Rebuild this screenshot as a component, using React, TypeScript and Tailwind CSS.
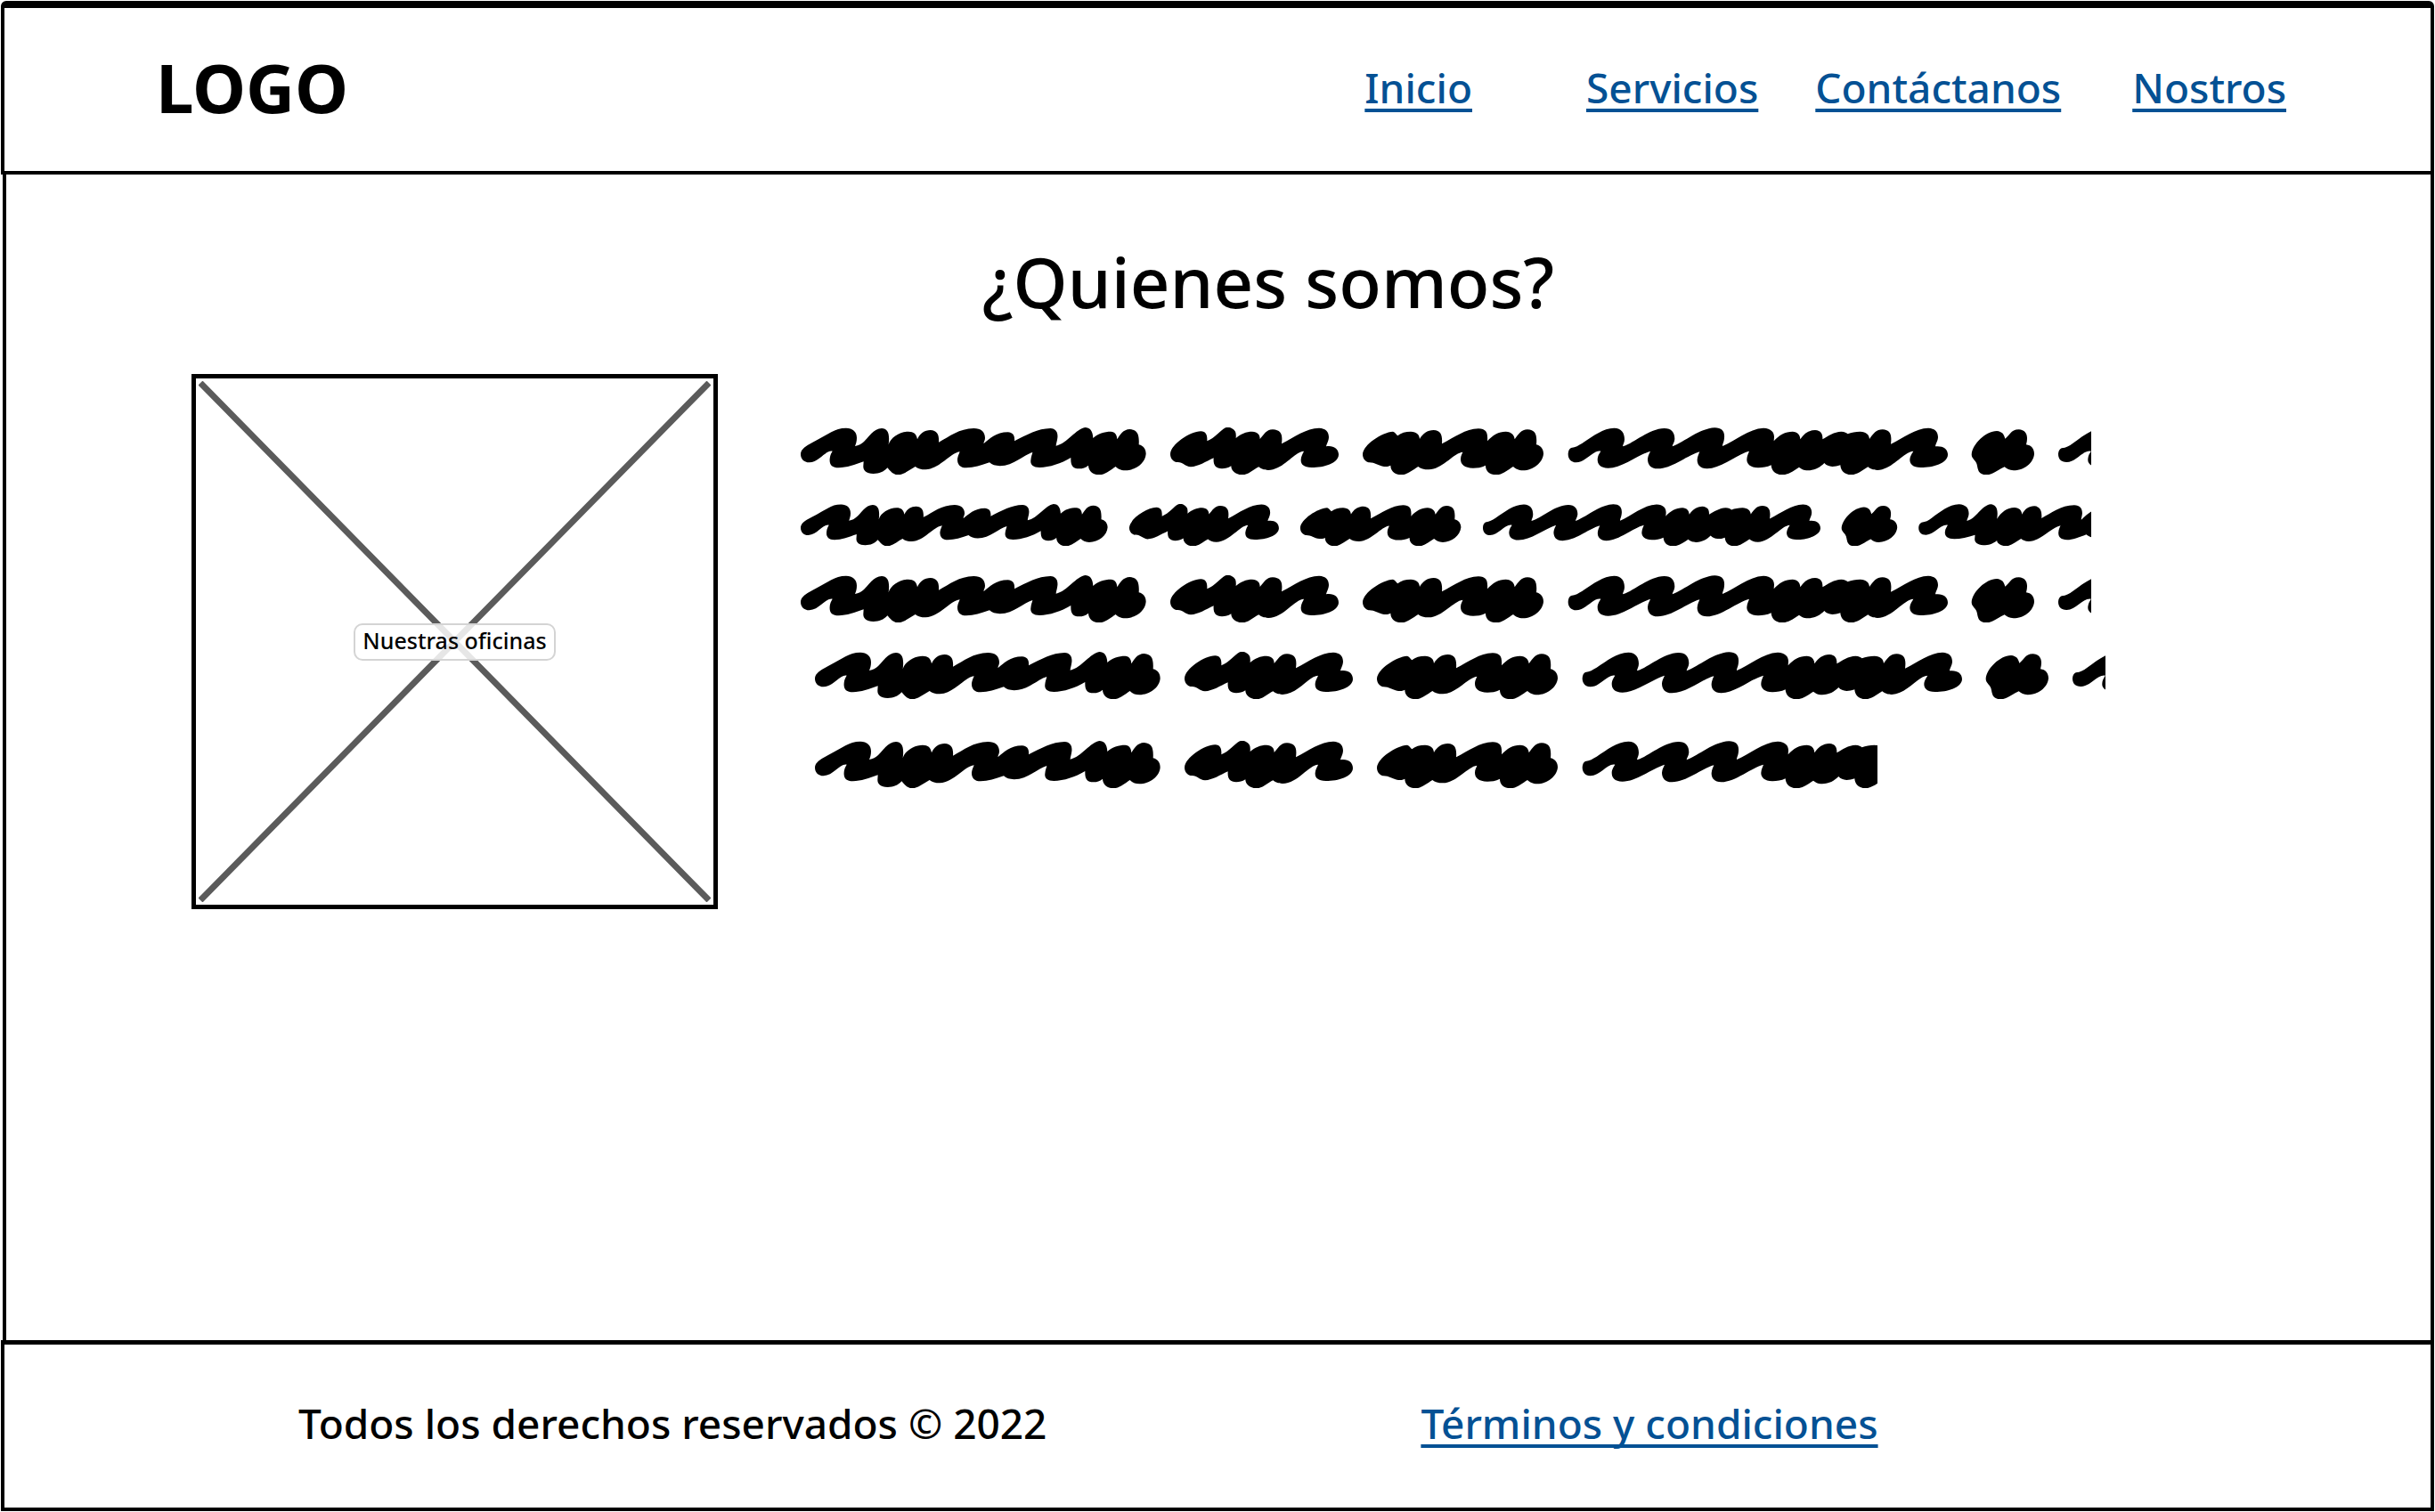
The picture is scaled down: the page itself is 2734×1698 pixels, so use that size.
const NAV_LINKS = [
  { label: "Inicio", spacing: "mr-16" },
  { label: "Servicios", spacing: "" },
  { label: "Contáctanos", spacing: "" },
  { label: "Nostros", spacing: "ml-4" },
];

const LINK_CLASS =
  "text-[#045194] underline decoration-4 underline-offset-[6px] [text-decoration-skip-ink:none]";

/* Scribbled words; each one is a blob outline and its shift along the line. */
const WORDS = [
  {
    transform: "translate(0 0)",
    d: "M57 152C57 140 66 131 80 122C105 109 130 95 160 78C175 69 190 64 210 64C232 64 246 76 246 97C246 110 243 116 240 125C252 123 262 118 270 110C285 97 303 65 330 65C350 66 358 82 353 120C360 95 392 76 420 76C438 76 447 84 450 102C458 82 474 71 494 71C518 72 524 88 522 112C560 92 590 66 640 65C664 65 678 77 678 97C678 108 672 112 674 116C692 102 715 78 755 78C772 79 779 90 777 108C820 86 855 66 898 65C918 66 924 80 922 97C921 108 917 116 917 124C955 116 985 66 1015 62C1030 62 1041 72 1042 98C1058 82 1080 76 1102 76C1116 77 1122 86 1123 102C1134 86 1142 69 1166 68C1192 70 1198 86 1196 120C1212 124 1220 136 1220 151C1218 182 1186 206 1150 207C1134 206 1126 202 1118 194C1100 206 1084 221 1062 222C1040 221 1027 208 1026 190C1016 198 1008 201 995 201C973 201 966 190 967 164C935 184 895 196 862 197C838 197 830 186 832 172C833 160 837 152 838 146C808 154 775 191 728 192C712 191 702 188 693 180C665 190 640 197 615 198C592 198 584 184 585 168C587 156 591 150 593 144C560 148 525 202 478 204C462 204 452 201 443 194C424 204 404 222 384 222C366 221 358 207 349 198C336 212 322 218 302 218C276 217 267 206 268 192L269 177C240 187 212 198 185 198C162 198 153 186 155 168C156 154 161 148 164 142C140 138 120 179 86 180C68 180 57 168 57 152Z",
  },
  {
    transform: "translate(1230 0)",
    d: "M72 152C74 118 138 76 175 75C193 76 197 88 196 108C222 99 242 70 258 63C266 61 276 62 280 66C293 74 294 80 293 98C308 84 328 76 348 76C366 77 374 86 374 101C388 86 394 70 417 69C446 71 451 86 447 117C490 95 530 64 573 64C596 65 606 77 606 95C605 110 599 116 597 126C622 122 639 134 639 154C638 182 590 197 548 197C520 196 511 186 512 170C513 157 520 148 522 142C490 143 455 204 402 206C386 206 378 201 370 195C352 204 336 221 315 222C292 222 277 208 277 192C266 199 258 201 246 201C224 200 216 188 218 165C192 177 166 194 141 195C120 193 114 176 92 179C80 176 72 165 72 152Z",
  },
  {
    transform: "translate(1230 0)",
    d: "M720 152C722 120 785 78 822 76C829 78 833 86 838 90C850 80 864 76 882 76C902 77 911 86 912 101C922 83 938 71 959 71C984 73 989 88 987 117C1030 95 1066 67 1110 66C1137 67 1142 80 1140 108C1158 88 1178 76 1202 76C1222 77 1231 88 1232 102C1244 86 1254 69 1275 69C1302 71 1308 86 1305 120C1321 124 1329 136 1329 151C1326 182 1294 206 1260 207C1244 206 1236 202 1227 194C1208 206 1192 221 1170 222C1146 221 1134 208 1134 190C1120 197 1106 199 1092 199C1062 198 1050 186 1050 169C1050 157 1056 150 1057 145C1027 148 988 203 943 204C926 204 915 201 907 194C888 206 868 222 850 222C828 221 814 208 814 190C806 194 800 194 792 194C772 191 760 179 740 180C728 176 720 166 720 152Z",
  },
  {
    transform: "translate(2430 0)",
    d: "M212 152C212 142 216 134 222 131C238 129 246 123 260 115C295 92 328 65 367 64C392 65 402 80 402 102C402 113 397 119 396 126C438 113 484 66 536 65C560 65 571 79 571 101C570 113 564 119 563 126C605 111 652 66 706 63C730 63 740 76 738 97C737 112 732 117 732 125C775 108 820 66 870 64C896 65 906 78 906 94L905 108C922 88 944 76 968 76C985 77 993 86 994 102C1007 82 1022 72 1044 71C1066 73 1070 86 1069 102C1088 90 1108 77 1132 76C1144 76 1150 81 1154 84C1166 79 1180 76 1196 76C1216 77 1226 86 1227 101C1240 83 1250 69 1271 69C1298 71 1303 86 1299 118C1342 96 1382 65 1425 64C1448 65 1458 77 1458 95C1457 110 1450 116 1449 126C1474 123 1491 134 1491 154C1490 182 1442 197 1400 197C1372 196 1363 186 1363 170C1364 157 1372 148 1375 142C1343 143 1305 204 1254 206C1238 206 1230 201 1222 195C1204 206 1188 221 1165 222C1143 221 1130 208 1129 189C1118 193 1112 194 1102 194C1090 193 1082 190 1075 182C1060 197 1044 206 1020 207C1004 206 998 202 990 196C972 208 954 222 932 222C910 221 897 208 896 189C882 196 868 198 852 198C824 197 813 184 814 169C815 156 820 148 822 142C782 152 728 200 680 201C655 200 646 186 647 170C648 158 653 150 655 144C612 156 562 201 514 201C489 201 480 186 480 169C481 156 487 148 489 142C445 156 393 199 347 199C320 198 311 186 311 169C312 155 319 148 322 142C297 136 272 180 239 180C222 180 212 168 212 152Z",
  },
  {
    transform: "translate(3630 0)",
    d: "M371 153C374 118 418 75 456 74C474 76 480 84 484 100C498 92 502 69 530 69C556 71 563 90 555 120C572 122 582 134 582 151C580 182 546 207 512 207C498 206 490 202 482 195C464 202 444 222 420 222C396 221 393 208 390 192C388 172 371 170 371 153Z",
  },
  {
    transform: "matrix(1.125 0 0 1.125 4077 -298)",
    d: "M192 400C192 391 196 385 202 382C216 380 224 376 236 367C264 347 294 322 328 321C352 322 362 336 361 354C360 366 355 370 355 377C386 370 404 324 435 321C454 323 461 338 456 370C470 348 490 332 515 332C532 333 539 342 540 355C550 337 562 328 582 327C602 329 608 343 606 368C640 350 670 325 716 324C736 325 744 336 743 353C742 364 739 368 740 373C754 360 765 350 776 344L800 330L800 436L774 432C768 430 762 428 757 423C732 433 710 441 692 441C670 440 662 430 663 416C664 404 668 398 670 393C640 398 605 445 563 446C550 445 544 442 537 437C520 446 504 462 486 462C468 461 456 452 456 443C440 456 428 458 410 459C388 458 380 448 381 437L382 424C358 432 334 438 312 438C288 437 279 428 281 413C282 402 288 396 290 391C264 388 246 424 217 424C200 424 192 414 192 400Z",
  },
];

const LINES = [
  { box: "max-w-[1449px]", svg: "h-[53px] w-[1449px]", viewBox: "57 62 4347 159" },
  { box: "max-w-[1449px]", svg: "h-[47px] w-[1449px]", viewBox: "57 62 4890 158" },
  { box: "max-w-[1449px]", svg: "h-[53px] w-[1449px]", viewBox: "57 62 4347 159" },
  { box: "ml-4 max-w-[1449px]", svg: "h-[53px] w-[1449px]", viewBox: "57 62 4347 159" },
  { box: "mt-[14px] ml-4 max-w-[1193px]", svg: "h-[53px] w-[1193px]", viewBox: "57 62 3579 159" },
];

function ScribbleLine({ line }: { line: (typeof LINES)[number] }) {
  return (
    <div className={`w-full overflow-hidden ${line.box}`}>
      <svg
        aria-hidden="true"
        className={`block max-w-none ${line.svg}`}
        viewBox={line.viewBox}
        preserveAspectRatio="xMinYMin meet"
      >
        {WORDS.map((word) => (
          <path key={word.d} d={word.d} transform={word.transform} fill="#000" />
        ))}
      </svg>
    </div>
  );
}

function ImagePlaceholder({ label }: { label: string }) {
  return (
    <figure className="relative flex h-[601px] w-[591px] shrink-0 items-center justify-center border-[5px] border-black">
      <svg
        aria-hidden="true"
        className="absolute inset-[3px] size-auto"
        viewBox="0 0 575 585"
        stroke="#5b5b5b"
        strokeWidth="7"
      >
        <path d="M2 2L573 583M573 2L2 583" />
      </svg>
      <figcaption className="relative rounded-[10px] border-2 border-[#d4d4d4] bg-white/85 px-2 pb-1 text-[25px] leading-[34px] font-medium">
        {label}
      </figcaption>
    </figure>
  );
}

export default function App() {
  return (
    <div className="flex min-h-screen flex-col bg-white px-px pt-px pb-px font-['Noto_Sans',sans-serif] text-black">
      <header className="flex items-center justify-between rounded-t-[6px] border-4 border-t-8 border-black pt-[37px] pr-[162px] pb-[42px] pl-[170px]">
        <a href="#" className="text-[76px] leading-[104px] font-bold">
          LOGO
        </a>
        <nav className="flex gap-16 text-[46px] leading-[64px] font-medium">
          {NAV_LINKS.map((link) => (
            <a key={link.label} href="#" className={`${LINK_CLASS} ${link.spacing}`}>
              {link.label}
            </a>
          ))}
        </nav>
      </header>

      <main className="ml-[2px] flex-1 border-x-4 border-black pt-[72px]">
        <h1 className="pl-28 text-center text-[78px] leading-[96px] font-medium">
          ¿Quienes somos?
        </h1>
        <div className="mt-14 flex pl-[208px]">
          <ImagePlaceholder label="Nuestras oficinas" />
          <div className="ml-[93px] flex min-w-0 flex-1 flex-col gap-[33px] pt-[60px]">
            {LINES.map((line, index) => (
              <ScribbleLine key={index} line={line} />
            ))}
          </div>
        </div>
      </main>

      <footer className="flex items-center gap-[420px] border-4 border-t-5 border-black pt-14 pb-[63px] pl-[330px] text-[46px] leading-[64px] font-medium">
        <p>Todos los derechos reservados © 2022</p>
        <a href="#" className={LINK_CLASS}>
          Términos y condiciones
        </a>
      </footer>
    </div>
  );
}
